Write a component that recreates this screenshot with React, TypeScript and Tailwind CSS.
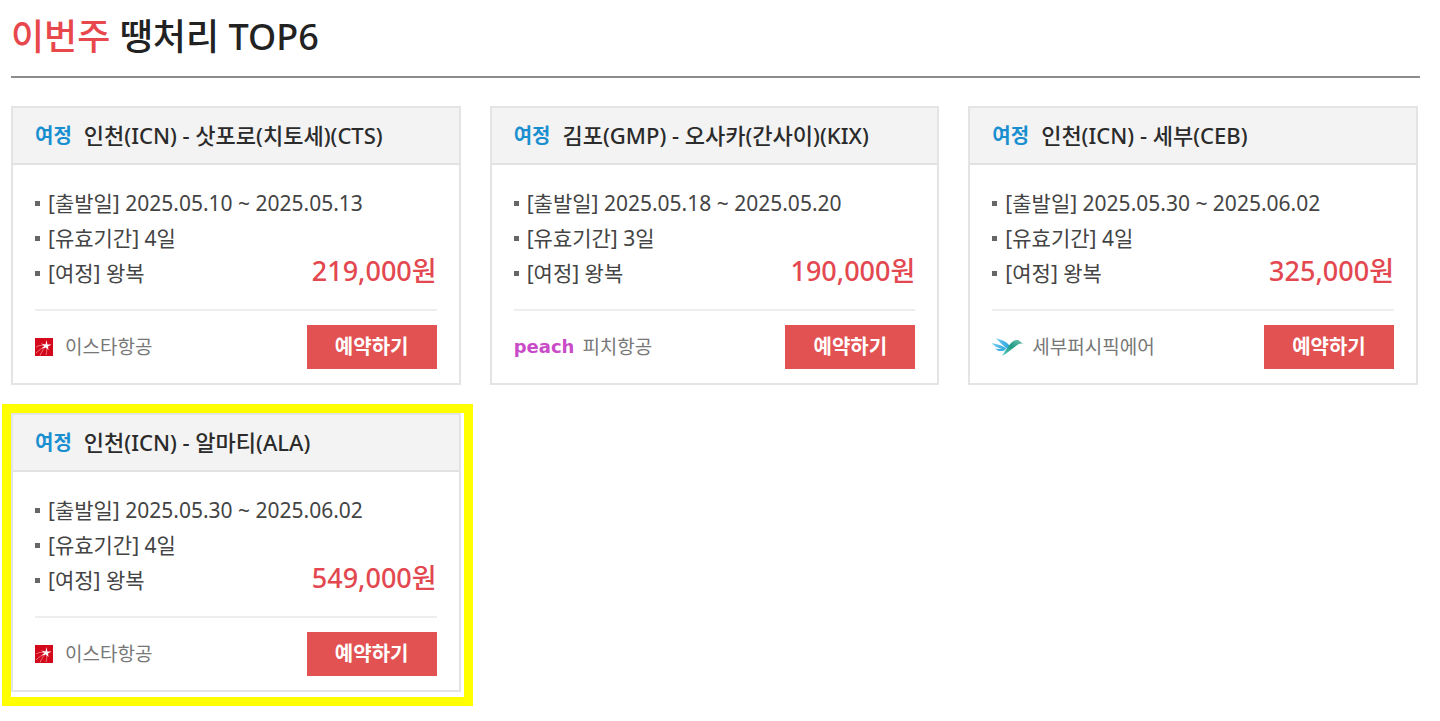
import React from 'react';

type Airline = 'eastar' | 'peach' | 'cebu';

interface Deal {
  route: string;
  dates: string;
  validity: string;
  trip: string;
  price: string;
  airline: Airline;
  highlighted?: boolean;
}

const airlineNames: Record<Airline, string> = {
  eastar: '이스타항공',
  peach: '피치항공',
  cebu: '세부퍼시픽에어',
};

const deals: Deal[] = [
  { route: '인천(ICN) - 삿포로(치토세)(CTS)', dates: '2025.05.10 ~ 2025.05.13', validity: '4일', trip: '왕복', price: '219,000원', airline: 'eastar' },
  { route: '김포(GMP) - 오사카(간사이)(KIX)', dates: '2025.05.18 ~ 2025.05.20', validity: '3일', trip: '왕복', price: '190,000원', airline: 'peach' },
  { route: '인천(ICN) - 세부(CEB)', dates: '2025.05.30 ~ 2025.06.02', validity: '4일', trip: '왕복', price: '325,000원', airline: 'cebu' },
  { route: '인천(ICN) - 알마티(ALA)', dates: '2025.05.30 ~ 2025.06.02', validity: '4일', trip: '왕복', price: '549,000원', airline: 'eastar', highlighted: true },
];

const AirlineLogo: React.FC<{ airline: Airline }> = ({ airline }) => {
  if (airline === 'eastar') {
    return (
      <svg className="mr-3 h-[18px] w-[18px]" viewBox="0 0 18 18" aria-hidden="true">
        <rect width="18" height="18" fill="#d3091b" />
        <path d="M1 9C4 7 7 7 11 8M1 15C4 12 7 10 11 8M5 17.500C7 13 9 10 11 8M11 8C12 11 12 14 11 17" stroke="#ee8a92" strokeWidth="0.8" fill="none" />
        <path d="M11.500 2L12.400 6.500L16.500 6.500L13 8.600L13.500 12L11 9.500L6.500 10.500L9.500 8L6 5.500L10.500 6.500Z" fill="#fff" />
      </svg>
    );
  }

  if (airline === 'peach') {
    return (
      <span className="mr-2 font-['DejaVu_Sans',sans-serif] text-lg leading-6 font-bold text-[#c94bc8]">peach</span>
    );
  }

  return (
    <svg className="mr-2 h-5 w-8" viewBox="0 0 32 20" aria-hidden="true">
      <defs>
        <linearGradient id="cebuWing" x1="0" y1="0" x2="1" y2="0">
          <stop offset="0" stopColor="#74cbf4" />
          <stop offset="1" stopColor="#2ba6dc" />
        </linearGradient>
        <linearGradient id="cebuBody" x1="0" y1="1" x2="1" y2="0">
          <stop offset="0" stopColor="#5fd0c8" />
          <stop offset="0.5" stopColor="#1e9c86" />
          <stop offset="1" stopColor="#7cc4b3" />
        </linearGradient>
      </defs>
      <path d="M4 1C9 3 14 4 17 8C17.500 10 16 12 14 11C11 8 7 5 4 1Z" fill="url(#cebuWing)" />
      <path d="M0 6C5 7.500 10 8 14 11.500L13 12.500C8 12 3 10 0 6Z" fill="url(#cebuWing)" />
      <path d="M3 11.500C7 12.500 10 11.500 14 12.500C10 15 6 14.500 3 11.500Z" fill="#3aafe0" />
      <path d="M10 19C13 15 15 10 19 6C22 3 26 2 28 4.500L32 7C29 6 26 7 24 9C20 11.500 16 16 10 19Z" fill="url(#cebuBody)" />
    </svg>
  );
};

const Bullet: React.FC = () => <span className="mr-2 h-[5px] w-[5px] shrink-0 bg-[#666]"></span>;

const DealCard: React.FC<{ deal: Deal }> = ({ deal }) => (
  <li className="relative">
    <article className="border-2 border-[#e4e4e4] bg-white">
      <h2 className="flex items-center gap-3 border-b-2 border-[#e2e2e2] bg-[#f3f3f3] px-[22px] text-[22px] leading-[55px] font-medium text-[#2b2b2b]">
        <span className="text-xl leading-[55px] font-bold text-[#1a8fd0]">여정</span>
        <span className="whitespace-nowrap">{deal.route}</span>
      </h2>

      <div className="px-[22px] pt-[21px] pb-[14px]">
        <ul className="text-[21px] leading-[35px] text-[#444]">
          <li className="flex items-center"><Bullet />[출발일] {deal.dates}</li>
          <li className="flex items-center"><Bullet />[유효기간] {deal.validity}</li>
          <li className="flex items-center">
            <Bullet />[여정] {deal.trip}
            <strong className="ml-auto self-start text-[27px] leading-[29px] font-medium text-[#e34850]">{deal.price}</strong>
          </li>
        </ul>

        {/* Airline and booking */}
        <div className="mt-[18px] flex items-center border-t-2 border-[#eee] pt-[14px]">
          <AirlineLogo airline={deal.airline} />
          <span className="text-[19px] leading-6 text-[#777]">{airlineNames[deal.airline]}</span>
          <button type="button" className="ml-auto h-11 w-[130px] bg-[#e25252] text-xl font-bold text-white hover:bg-[#d24343]">
            예약하기
          </button>
        </div>
      </div>
    </article>

    {deal.highlighted && (
      <div className="pointer-events-none absolute -top-[9px] -right-3 -bottom-[14px] -left-[9px] border-[9px] border-[#ff0]"></div>
    )}
  </li>
);

const App: React.FC = () => {
  return (
    <main className="bg-white pt-3 pr-5 pb-7 pl-[11px] font-['Noto_Sans','Noto_Sans_CJK_KR',sans-serif]">
      <h1 className="border-b-2 border-[#8c8c8c] pb-[14px] text-4xl leading-[50px] font-medium text-[#222]">
        <span className="text-[#e8474c]">이번주</span> 땡처리 TOP6
      </h1>

      <ul className="mt-7 grid grid-cols-3 gap-x-[29px] gap-y-7 pr-0.5">
        {deals.map((deal, idx) => (
          <DealCard key={idx} deal={deal} />
        ))}
      </ul>
    </main>
  );
};

export default App;
